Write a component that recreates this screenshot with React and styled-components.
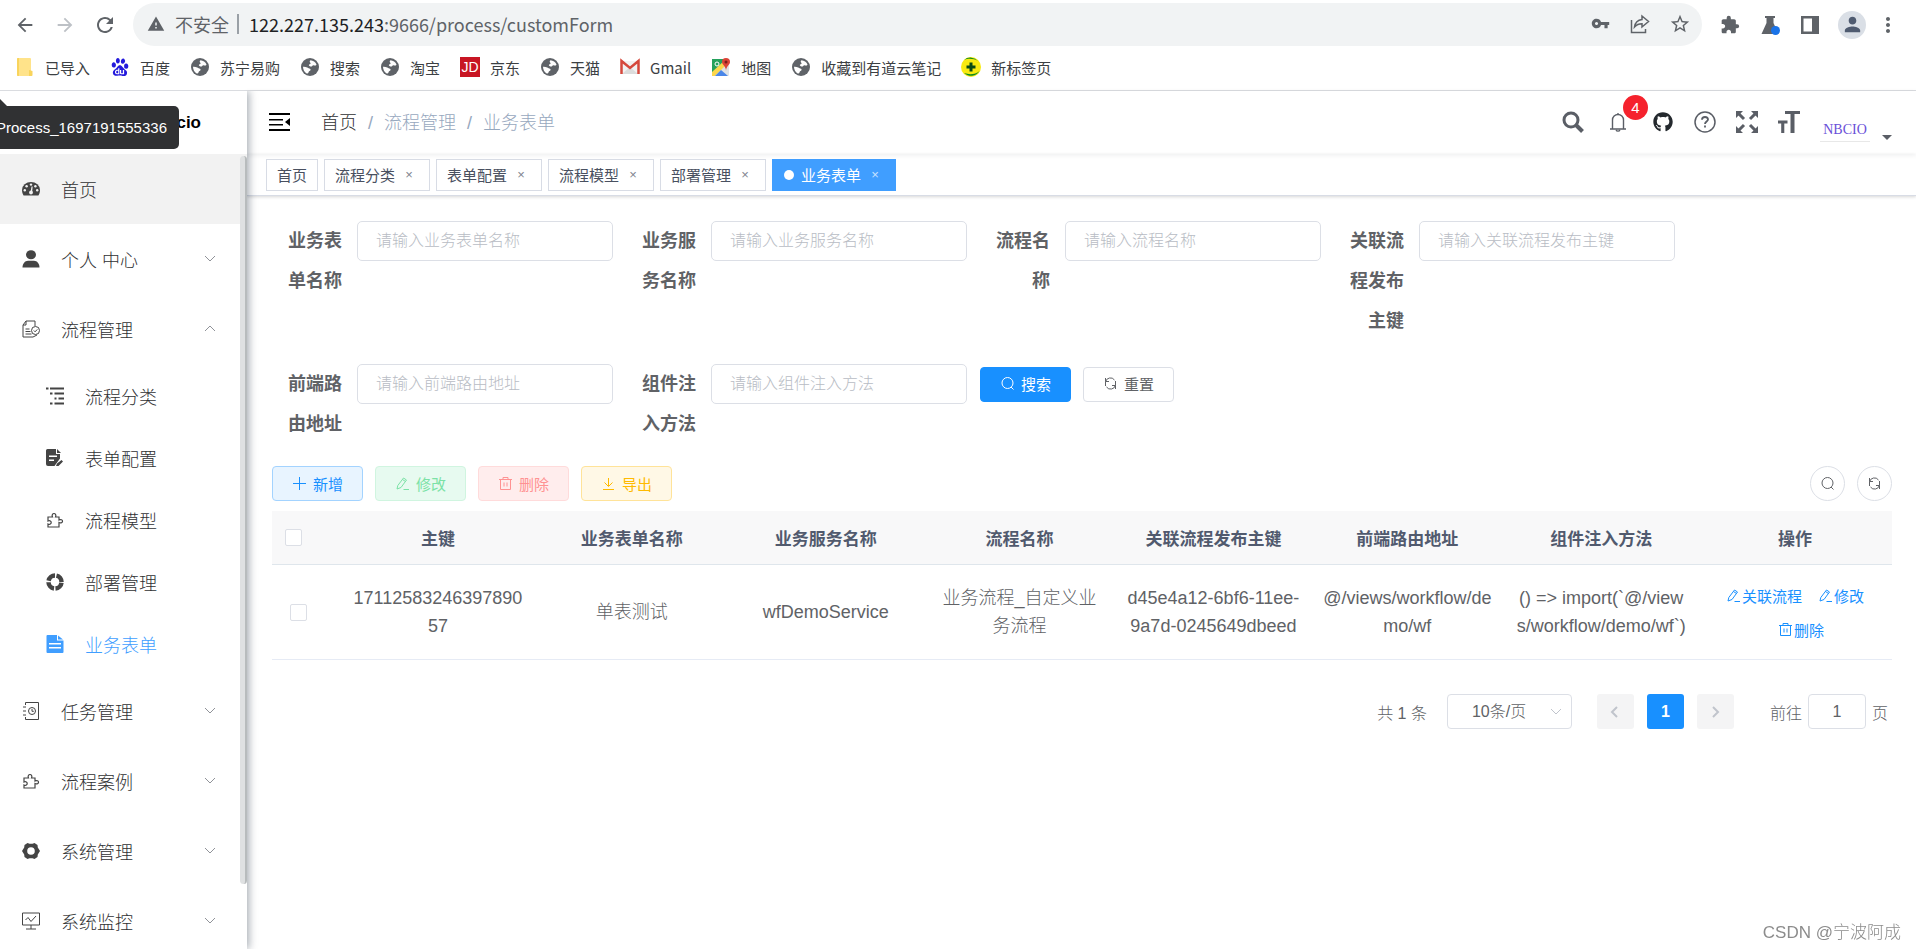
import React, { useState } from "react";
import styled, { createGlobalStyle, css } from "styled-components";
import {
  MdArrowBack,
  MdArrowForward,
  MdRefresh,
  MdWarning,
  MdVpnKey,
  MdStarBorder,
  MdExtension,
  MdPerson,
  MdMoreVert,
} from "react-icons/md";
import { FaGithub } from "react-icons/fa";
import { SiBaidu } from "react-icons/si";

const GlobalStyle = createGlobalStyle`
  * {
    box-sizing: border-box;
  }
  body {
    margin: 0;
    background: #fff;
    color: #606266;
    font-family: "Liberation Sans", "Noto Sans CJK SC", sans-serif;
    font-size: 18px;
    font-weight: 300;
  }
  button, input, select {
    font-family: inherit;
    font-weight: inherit;
    margin: 0;
  }
  a {
    color: inherit;
    text-decoration: none;
  }
  svg {
    display: block;
    flex: none;
  }
`;

/* ---------- icons ---------- */

const Svg = ({ size = 18, box = 24, children, ...rest }) => (
  <svg width={size} height={size} viewBox={`0 0 ${box} ${box}`} fill="none" stroke="currentColor" aria-hidden="true" {...rest}>
    {children}
  </svg>
);

const GlobeIcon = () => (
  <Svg size={18} box={18} stroke="none">
    <circle cx="9" cy="9" r="9" fill="#5f6368" />
    <path d="M9.5 2.200c2.600.3 5 1.800 6 4.200-.5 1.400-1.600 1.300-2.400 1-.8-.5-1.500-.2-1.900.5-.6 1-1.900.6-2.700 0-1-.6-.8-1.400.3-1.700 1-.3 1-1.100.3-1.700-.6-.7-.4-1.800.4-2.300z" fill="#fff" />
    <path d="M2 8.700c1.300-.2 3 .1 4.200.9.9.6 2 .7 2.800 1.200 1 .7.7 1.900-.4 2.200-.9.200-1 1-1.200 1.800-.2.700-1 1-1.700.6C3.400 14 2 11.500 2 8.700z" fill="#fff" />
  </Svg>
);

const FolderIcon = () => (
  <Svg size={20} box={20} stroke="none">
    <rect x="2" y="1" width="14" height="18" rx="1" fill="#ffe38a" />
    <path d="M2 2a1 1 0 0 1 1-1h1v18H3a1 1 0 0 1-1-1z" fill="#f9d45c" />
    <path d="M14 13l3.500 1v4a1 1 0 0 1-1 1H14z" fill="#f9d45c" />
  </Svg>
);

const GmailIcon = () => (
  <Svg size={20} box={20} stroke="none">
    <path d="M2 4h16v13H2z" fill="#f2f2f2" />
    <path d="M2 17l8-7 8 7z" fill="#dcdcdc" />
    <path d="M1.500 17V4l8.500 7 8.500-7v13" stroke="#d5483c" strokeWidth="2.500" fill="none" />
  </Svg>
);

const MapIcon = () => (
  <Svg size={20} box={20} stroke="none">
    <rect x="1" y="2" width="17" height="17" rx="1" fill="#dfe3e6" />
    <path d="M1 2h13v5L1 17z" fill="#25a15c" />
    <path d="M1 15L13 4l3 3L4 19H1z" fill="#fbd64c" />
    <path d="M4 19l6-6 7 6z" fill="#4a86e8" />
    <circle cx="6" cy="7" r="2" stroke="#fff" />
    <path d="M15 1a4 4 0 0 1 4 4c0 3-4 4-4 9 0-5-4-6-4-9a4 4 0 0 1 4-4z" fill="#db4437" />
    <circle cx="15" cy="5" r="1.500" fill="#7b1f19" />
  </Svg>
);

const PlusBallIcon = () => (
  <Svg size={20} box={20} stroke="none">
    <circle cx="10" cy="10" r="10" fill="#f8ea10" />
    <path d="M3 3a10 10 0 0 1 14 1c-4-2.500-10-3-14-1zM3 16a10 10 0 0 0 15.500-2c-4 3.500-10 4-15.500 2z" fill="#0d8a1f" />
    <path d="M10 5.500v9M5.500 10h9" stroke="#0b4a14" strokeWidth="3" />
  </Svg>
);

const ShareIcon = () => (
  <Svg size={20} box={20} strokeWidth="1.500">
    <path d="M1.500 6v12.500h14V15" />
    <path d="M12 2l6.500 5.500L12 13V9.800c-3.500 0-5.500 1-7.500 3.200.6-4 3-7 7.500-7.500z" />
  </Svg>
);

const FlaskIcon = () => (
  <Svg size={20} box={20} stroke="none">
    <path d="M5 1h10v2h-1.500v5l5 11H1.500l5-11V3H5z" fill="#5f6368" />
    <circle cx="15.500" cy="15.500" r="4.500" fill="#1a73e8" />
  </Svg>
);

const PanelIcon = () => (
  <Svg size={18} box={18} stroke="none">
    <path fillRule="evenodd" d="M0 0h18v18H0zM2.500 2.500v13H11v-13z" fill="#5f6368" />
  </Svg>
);

const DashboardIcon = () => (
  <Svg stroke="none" box={18}>
    <path d="M0 10a9 8 0 0 1 18 0c0 2.200-.6 4-1.600 5.500H1.600C.6 14 0 12.200 0 10z" fill="currentColor" />
    <g fill="#f2f2f2">
      <circle cx="2.800" cy="10.200" r="1.200" />
      <circle cx="4.600" cy="6.300" r="1.200" />
      <circle cx="9" cy="4.600" r="1.200" />
      <circle cx="13.400" cy="6.300" r="1.200" />
      <circle cx="15.200" cy="10.200" r="1.200" />
      <circle cx="9" cy="12.500" r="1.900" />
      <path d="M9.500 6.500h1.200L10 12.500H8.500z" />
    </g>
  </Svg>
);

const PeopleIcon = () => (
  <Svg stroke="none" box={18}>
    <ellipse cx="9" cy="4.700" rx="5" ry="4.500" fill="currentColor" />
    <path d="M.5 17.500c0-4 2.500-6.800 5.500-6.800h6c3 0 5.500 2.800 5.500 6.800z" fill="currentColor" />
  </Svg>
);

const ProcessIcon = () => (
  <Svg box={18}>
    <path d="M11 17H1V5l3-4h9v5M1 5h3V1M3.500 9h4M3.500 11.500h5M3.500 14h6" />
    <circle cx="13.500" cy="10.500" r="4" />
    <path d="M11.800 10.500l1.300 1.300 2.200-2.400M11 17l4-2" />
  </Svg>
);

const TreeIcon = () => (
  <Svg box={18} strokeWidth="2">
    <path d="M0 1.500h2.500M4 1.500h14M4 6.500h2.500M8.500 6.500H18M8.500 11.500h2M12.500 11.500H18M4 16.500h2.500M8.500 16.500H18" />
  </Svg>
);

const FormIcon = () => (
  <Svg box={18} stroke="none">
    <path fillRule="evenodd" d="M1.500 0H10v5h4v4.500L8.500 17H2a2 2 0 0 1-2-2V1.500A1.500 1.500 0 0 1 1.500 0zM3 6.500V8h8V6.500zm0 4V12h5v-1.500z" fill="currentColor" />
    <path d="M11 0l4 4h-4zM10 17l1-2.500 4.500-3.500 1.500 1.500L12.500 17z" fill="currentColor" />
  </Svg>
);

const PuzzleIcon = () => (
  <Svg box={18} strokeWidth="1.200">
    <path d="M2 6h4.500c-1-2 .2-3.500 1.500-3.500S10.500 4 9.500 6H13v3c2-1 3.500 0 3.500 1.200S15 12.500 13 11.500V16H2v-3c2 .8 3.200-.2 3.200-1.500S4 9.200 2 10z" />
  </Svg>
);

const RingIcon = () => (
  <Svg box={18}>
    <circle cx="9" cy="9" r="6.500" strokeWidth="4.500" strokeDasharray="8.700 1.510" strokeDashoffset="-.75" />
  </Svg>
);

const DocIcon = () => (
  <Svg box={18} stroke="none">
    <path fillRule="evenodd" d="M1.500 0H11v5.500h6.500V17a1 1 0 0 1-1 1h-15a1 1 0 0 1-1-1V1a1 1 0 0 1 1-1zM3 8v1.500h12V8zm0 4v1.500h12V12z" fill="currentColor" />
    <path d="M12 .5l5 4h-5z" fill="currentColor" />
  </Svg>
);

const TaskIcon = () => (
  <Svg box={18}>
    <path d="M3.500 3V.5h13v17h-13V15M1 5h3M1 9h3M1 13h3" />
    <circle cx="10" cy="9" r="3.500" />
    <path d="M10 7v2.300h1.800" />
  </Svg>
);

const GearIcon = () => (
  <Svg box={18} stroke="none">
    <path fillRule="evenodd" d="M5.500 1l2 .8h3l2-.8 3 2 .3 2.500L18 9l-2.200 3.500-.3 2.500-3 2-2-.8h-3l-2 .8-3-2-.3-2.500L0 9l2.200-3.500L2.500 3zM9 5.200a3.800 3.800 0 1 0 0 7.600 3.800 3.800 0 0 0 0-7.600z" fill="currentColor" />
  </Svg>
);

const MonitorIcon = () => (
  <Svg box={18}>
    <path d="M.5 1h17v12H.5zM9 13v4M4 17h10M3.500 8l2.500-2.500 3 4L14 4" />
  </Svg>
);

const Chevron = ({ up }) => (
  <Svg size={12} box={12}>
    <path d={up ? "M1 8l5-5 5 5" : "M1 3l5 5 5-5"} />
  </Svg>
);

const FoldIcon = () => (
  <svg width="21" height="18" viewBox="0 0 21 18" aria-hidden="true">
    <path d="M0 0h21v2H0zM0 6h14v1.500H0zM0 11h14v1.500H0zM0 16h21v2H0zM21 5v8l-5-4z" fill="#000" />
  </svg>
);

const SearchBold = () => (
  <Svg size={22} box={22}>
    <circle cx="9" cy="9" r="7" strokeWidth="3" />
    <path d="M14 14l6.500 6.500" strokeWidth="4" />
  </Svg>
);

const BellIcon = () => (
  <Svg size={20} box={20} strokeWidth="1.400">
    <path d="M10 1v1.500M4.500 17V8a5.500 5.500 0 0 1 11 0v9M2 17h16M8 18.200c.8 1.200 3.200 1.200 4 0" />
  </Svg>
);

const HelpIcon = () => (
  <Svg size={22} box={22} strokeWidth="1.500">
    <circle cx="11" cy="11" r="10" />
    <path d="M8 8.800C8 7 9.300 6 11 6s3 1 3 2.600C14 10.500 11 10.700 11 13" strokeWidth="1.800" />
    <path d="M11 14.500v2" strokeWidth="1.800" />
  </Svg>
);

const FullIcon = () => (
  <Svg size={22} box={22} strokeWidth="3">
    <path d="M2 2l6 6M20 2l-6 6M2 20l6-6M20 20l-6-6" />
    <path d="M0 0h7L0 7zM22 0v7l-7-7zM0 22v-7l7 7zM22 22h-7l7-7z" fill="currentColor" stroke="none" />
  </Svg>
);

const SizeIcon = () => (
  <Svg size={22} box={22} stroke="none">
    <path d="M7 0h15v3h-5.500v19h-4V3H7zM0 9.500h9.500v3H6.300V22H3.200v-9.500H0z" fill="currentColor" />
  </Svg>
);

const SearchThin = () => (
  <Svg size={15} box={15}>
    <circle cx="7.500" cy="7" r="5.500" />
    <path d="M11 11l2.500 2.500" />
  </Svg>
);

const RefreshThin = () => (
  <Svg size={15} box={15}>
    <path d="M2.500 10V6a5 5 0 0 1 9-2M12.500 5v4a5 5 0 0 1-9 2M2.500 2v3.500H6M12.500 13V9.500H9" />
  </Svg>
);

const EditThin = () => (
  <Svg size={15} box={15}>
    <path d="M2 13l.8-3.500L8.500 2l3 2L6 11.500zM7.500 3.500l3 2M8.500 13.500H14" />
  </Svg>
);

const TrashThin = () => (
  <Svg size={15} box={15}>
    <path d="M1 3.500h13M5 3V1.500h5V3M2.500 3.500v10h10v-10M6 6.500v4M9 6.500v4" />
  </Svg>
);

const PlusThin = () => (
  <Svg size={15} box={15}>
    <path d="M7.500 1v13M1 7.500h13" />
  </Svg>
);

const DownThin = () => (
  <Svg size={15} box={15}>
    <path d="M7.500 2v8M3.500 6.500l4 4 4-4M2 13.500h11" />
  </Svg>
);

/* ---------- browser bar ---------- */

const BrowserBar = styled.header`
  border-bottom: 1px solid #dadce0;
  font-family: "Noto Sans CJK SC", sans-serif;
  font-weight: 400;
  color: #5f6368;
`;

const AddressRow = styled.div`
  display: flex;
  align-items: center;
  padding: 3px 0 0 13px;
`;

const ToolButton = styled.button`
  display: flex;
  align-items: center;
  justify-content: center;
  width: 24px;
  height: 24px;
  padding: 0;
  border: 0;
  background: none;
  color: ${(props) => (props.$dim ? "#bdc1c6" : "#5f6368")};
  margin-right: 16px;
`;

const Omnibox = styled.div`
  flex: 1;
  display: flex;
  align-items: center;
  height: 43px;
  margin-right: 16px;
  padding: 0 10px 2px 14px;
  border-radius: 22px;
  background: #f1f3f4;
  font-size: 18px;
  white-space: nowrap;

  button:last-child {
    margin-right: 0;
  }
`;

const Insecure = styled.span`
  padding: 0 8px 0 10px;
  line-height: 20px;
  border-right: 2px solid #9aa0a6;
  margin-right: 10px;
`;

const Url = styled.span`
  flex: 1;

  b {
    font-weight: 400;
    color: #202124;
  }
`;

const Profile = styled.button`
  display: flex;
  align-items: center;
  justify-content: center;
  width: 28px;
  height: 28px;
  margin-right: 10px;
  padding: 0;
  border: 0;
  border-radius: 50%;
  background: #dadfe6;
  color: #4f5b70;
`;

const Bookmarks = styled.nav`
  display: flex;
  gap: 20px;
  height: 44px;
  padding: 0 15px 2px;
  align-items: center;
  font-size: 15px;
  color: #3c4043;

  a {
    display: flex;
    align-items: center;
    gap: 10px;
  }
`;

const BookmarkIcon = styled.span`
  display: flex;
  justify-content: center;
  width: 20px;
`;

const JdMark = styled.span`
  width: 20px;
  height: 20px;
  background: #c81623;
  color: #fff;
  font: 400 14px/20px "Liberation Sans", sans-serif;
  text-align: center;
`;

/* ---------- layout ---------- */

const Page = styled.div`
  display: flex;
  flex-direction: column;
  height: 100vh;
  overflow: hidden;
`;

const Body = styled.div`
  display: flex;
  flex: 1;
  min-height: 0;
`;

const Sidebar = styled.aside`
  position: relative;
  z-index: 2;
  width: 247px;
  flex: none;
  background: #fff;
  box-shadow: 2px 0 8px rgba(0, 21, 41, 0.35);
  clip-path: inset(0 -12px 0 0);
  color: #303133;
`;

const Logo = styled.h1`
  margin: 0;
  height: 63px;
  padding-right: 46px;
  font-size: 17px;
  line-height: 63px;
  text-align: right;
  color: #000;
`;

const IdTip = styled.div`
  position: absolute;
  z-index: 3;
  left: -16px;
  top: 15px;
  padding: 0 12px;
  border-radius: 5px;
  background: #303133;
  color: #fff;
  font-size: 15px;
  line-height: 43px;

  &::before {
    content: "";
    position: absolute;
    left: 7px;
    top: -8px;
    border: 8px solid transparent;
    border-top: 0;
    border-bottom-color: #303133;
  }
`;

const Menu = styled.ul`
  margin: 0;
  padding: ${(props) => (props.$sub ? "1px 0" : "0")};
  list-style: none;
`;

const MenuLink = styled.a`
  display: flex;
  align-items: center;
  height: ${(props) => (props.$sub ? 62 : 70)}px;
  padding: 0 31px 0 ${(props) => (props.$sub ? 46 : 22)}px;
  gap: 21px;
  background: ${(props) => (props.$hover ? "#f2f2f2" : "transparent")};
  color: ${(props) => (props.$active ? "#409eff" : "inherit")};

  span {
    flex: 1;
  }
  svg:first-child {
    color: ${(props) => (props.$active ? "#409eff" : "#444")};
  }
  svg:last-child {
    color: #909399;
  }
`;

const ScrollThumb = styled.i`
  position: absolute;
  top: 65px;
  right: 0;
  bottom: 65px;
  width: 7px;
  border-right: 2px solid #b8bcbd;
  border-radius: 4px;
  background: #dfe1e2;
`;

const Main = styled.main`
  flex: 1;
  min-width: 0;
`;

const Navbar = styled.div`
  display: flex;
  align-items: center;
  height: 63px;
  padding: 0 24px 2px 21px;
  box-shadow: 0 1px 5px rgba(0, 21, 41, 0.08);
  color: #5a5e66;
`;

const IconButton = styled.button`
  position: relative;
  display: flex;
  justify-content: center;
  padding: 0;
  border: 0;
  background: none;
  color: ${(props) => props.$color || "#5a5e66"};
  width: ${(props) => props.$width || 22}px;
`;

const Crumbs = styled.nav`
  flex: 1;
  display: flex;
  align-items: baseline;
  gap: 11px;
  margin-left: 31px;
  padding-bottom: 2px;
  color: #97a8be;

  a:first-child {
    color: #303133;
  }
`;

const NavTools = styled.div`
  display: flex;
  align-items: center;
  gap: 20px;
`;

const Badge = styled.span`
  position: absolute;
  top: -17px;
  right: -16px;
  width: 25px;
  height: 25px;
  border-radius: 50%;
  background: #f5222d;
  color: #fff;
  font-size: 15px;
  line-height: 25px;
`;

const UserMenu = styled.button`
  display: flex;
  align-items: flex-end;
  gap: 12px;
  padding: 0;
  border: 0;
  background: none;

  span {
    width: 50px;
    padding: 8px 0 3px;
    border-bottom: 1px solid #e8e8e8;
    color: #6a4fd8;
    font: 14px/17px "Liberation Serif", serif;
    text-align: center;
    margin-top: 12px;
  }
  i {
    margin-bottom: 2px;
    border: 5px solid transparent;
    border-top-color: #5a5e66;
    border-bottom: 0;
  }
`;

const TagBar = styled.div`
  display: flex;
  gap: 6px;
  height: 42px;
  padding: 5px 19px;
  border-bottom: 1px solid #d8dce5;
  box-shadow: 0 1px 3px rgba(0, 0, 0, 0.16);
`;

const Tag = styled.a`
  display: flex;
  align-items: center;
  height: 32px;
  padding: 0 10px 1px;
  border: 1px solid ${(props) => (props.$active ? "#409eff" : "#d8dce5")};
  background: ${(props) => (props.$active ? "#409eff" : "#fff")};
  color: ${(props) => (props.$active ? "#fff" : "#495060")};
  font-size: 15px;
  font-weight: 400;

  ${(props) =>
    props.$active &&
    css`
      &::before {
        content: "";
        width: 10px;
        height: 10px;
        margin: 0 7px 0 1px;
        border-radius: 50%;
        background: #fff;
      }
    `}
`;

const TagClose = styled.span`
  width: 20px;
  margin-left: 4px;
  text-align: center;
  font-size: 13px;
  opacity: 0.7;
`;

const Content = styled.div`
  padding: 25px 24px 0 25px;
`;

/* ---------- query form ---------- */

const QueryForm = styled.form`
  display: flex;
  flex-wrap: wrap;
  align-items: flex-start;
  gap: 23px 13px;
  margin-bottom: 22px;
`;

const Field = styled.div`
  display: flex;
  align-items: flex-start;

  label {
    width: 85px;
    padding-right: 15px;
    font-weight: 700;
    line-height: 40px;
    text-align: right;
  }
  input {
    width: 256px;
    height: 40px;
    padding: 0 18px;
    border: 1px solid #dcdfe6;
    border-radius: 5px;
    font-size: 16px;
    color: #606266;
  }
  input::placeholder {
    color: #b8bcc4;
  }
`;

const ButtonRow = styled.div`
  display: flex;
  gap: 12px;
  align-items: center;
  min-height: ${(props) => props.$height || 35}px;
`;

const tones = {
  primary: ["#1890ff", "#1890ff", "#fff"],
  plain: ["#fff", "#dcdfe6", "#606266"],
  add: ["#e8f4ff", "#a3d3ff", "#1890ff"],
  edit: ["#e7faf0", "#d0f5e0", "#7be2a6"],
  remove: ["#ffeded", "#ffdbdb", "#ff9292"],
  export: ["#fff8e6", "#ffe399", "#ffba00"],
};

const Button = styled.button`
  display: flex;
  align-items: center;
  gap: 6px;
  height: 35px;
  padding: 0 19px 1px;
  border-radius: 4px;
  border: 1px solid ${(props) => tones[props.$tone][1]};
  background: ${(props) => tones[props.$tone][0]};
  color: ${(props) => tones[props.$tone][2]};
  font-size: 15px;
  font-weight: 400;
`;

const RoundButton = styled.button`
  display: flex;
  align-items: center;
  justify-content: center;
  width: 35px;
  height: 35px;
  padding: 0;
  border: 1px solid #dcdfe6;
  border-radius: 50%;
  background: #fff;
  color: #606266;
`;

const Toolbar = styled.div`
  display: flex;
  justify-content: space-between;
  margin-bottom: 10px;
`;

/* ---------- table ---------- */

const Table = styled.table`
  width: 100%;
  table-layout: fixed;
  border-spacing: 0;
  text-align: center;

  th {
    height: 54px;
    padding: 0 11px;
    border-bottom: 1px solid #dfe6ec;
    background: #f8f8f9;
    color: #515a6e;
    font-size: 17px;
  }
  td {
    height: 95px;
    padding: 0 10px;
    border-bottom: 1px solid #e6ebf5;
    line-height: 28px;
    word-break: break-all;
    white-space: pre-line;
  }
  th:first-child {
    text-align: left;
    padding: 0 0 0 13px;
  }
  td:first-child {
    text-align: left;
    padding: 0 0 0 18px;
  }
`;

const CheckCol = styled.col`
  width: 69px;
`;

const Check = styled.input`
  appearance: none;
  display: block;
  width: 17px;
  height: 17px;
  margin: 0;
  border: 1px solid #dcdfe6;
  border-radius: 2px;
  background: #fff;
`;

const TextButton = styled.button`
  display: flex;
  align-items: center;
  gap: 1px;
  height: 34px;
  padding: 0;
  border: 0;
  background: none;
  color: #1890ff;
  font-size: 15px;
  font-weight: 400;

  & + & {
    margin-left: 12px;
  }
`;

const Actions = styled.div`
  display: flex;
  flex-wrap: wrap;
  justify-content: center;
  column-gap: 4px;
`;

const Pager = styled.div`
  display: flex;
  align-items: center;
  justify-content: flex-end;
  padding: 34px 4px 0 0;
  font-size: 16px;
`;

const SizeSelect = styled.div`
  display: grid;
  grid-template-columns: 1fr 22px;
  align-items: center;
  width: 125px;
  height: 35px;
  margin: 0 25px 0 20px;
  color: #c0c4cc;

  select {
    grid-area: 1 / 1 / 2 / 3;
    appearance: none;
    height: 35px;
    padding: 0 0 0 24px;
    border: 1px solid #dcdfe6;
    border-radius: 4px;
    background: none;
    color: #606266;
    font-size: 16px;
  }
  svg {
    grid-area: 1 / 2;
  }
`;

const PageButton = styled.button`
  display: flex;
  align-items: center;
  justify-content: center;
  width: 37px;
  height: 35px;
  padding: 0;
  border: 0;
  border-radius: 3px;
  font-size: 16px;
  font-weight: 700;
  background: ${(props) => (props.$current ? "#1890ff" : "#f4f4f5")};
  color: ${(props) => (props.$current ? "#fff" : "#c0c4cc")};
`;

const PageButtons = styled.div`
  display: flex;
  gap: 13px;
  margin-right: 36px;
`;

const Jump = styled.label`
  display: flex;
  align-items: center;
  gap: 6px;

  input {
    width: 58px;
    height: 35px;
    padding: 0;
    border: 1px solid #dcdfe6;
    border-radius: 4px;
    color: #606266;
    font-size: 16px;
    text-align: center;
  }
`;

const Watermark = styled.div`
  position: fixed;
  right: 15px;
  bottom: 6px;
  color: #8c8c8c;
  font-size: 17px;
`;

const bookmarks = [
  ["已导入", <FolderIcon />],
  ["百度", <SiBaidu size={18} color="#2319dc" />],
  ["苏宁易购", <GlobeIcon />],
  ["搜索", <GlobeIcon />],
  ["淘宝", <GlobeIcon />],
  ["京东", <JdMark>JD</JdMark>],
  ["天猫", <GlobeIcon />],
  ["Gmail", <GmailIcon />],
  ["地图", <MapIcon />],
  ["收藏到有道云笔记", <GlobeIcon />],
  ["新标签页", <PlusBallIcon />],
];

const menu = [
  { name: "首页", icon: <DashboardIcon />, leaf: true },
  { name: "个人 中心", icon: <PeopleIcon /> },
  {
    name: "流程管理",
    icon: <ProcessIcon />,
    children: [
      { name: "流程分类", icon: <TreeIcon /> },
      { name: "表单配置", icon: <FormIcon /> },
      { name: "流程模型", icon: <PuzzleIcon /> },
      { name: "部署管理", icon: <RingIcon /> },
      { name: "业务表单", icon: <DocIcon />, active: true },
    ],
  },
  { name: "任务管理", icon: <TaskIcon /> },
  { name: "流程案例", icon: <PuzzleIcon /> },
  { name: "系统管理", icon: <GearIcon /> },
  { name: "系统监控", icon: <MonitorIcon /> },
];

const tags = ["首页", "流程分类", "表单配置", "流程模型", "部署管理", "业务表单"];

const fields = [
  ["businessName", "业务表单名称", "请输入业务表单名称"],
  ["businessService", "业务服务名称", "请输入业务服务名称"],
  ["flowName", "流程名称", "请输入流程名称"],
  ["deployId", "关联流程发布主键", "请输入关联流程发布主键"],
  ["routeName", "前端路由地址", "请输入前端路由地址"],
  ["component", "组件注入方法", "请输入组件注入方法"],
];

const columns = ["主键", "业务表单名称", "业务服务名称", "流程名称", "关联流程发布主键", "前端路由地址", "组件注入方法", "操作"];

const rows = [
  [
    "1711258324639789057",
    "单表测试",
    "wfDemoService",
    "业务流程_自定义业\n务流程",
    "d45e4a12-6bf6-11ee-\n9a7d-0245649dbeed",
    "@/views/workflow/de\nmo/wf",
    "() => import(`@/view\ns/workflow/demo/wf`)",
  ],
];

const Browser = () => (
  <BrowserBar>
    <AddressRow>
      <ToolButton aria-label="back"><MdArrowBack size={22} /></ToolButton>
      <ToolButton aria-label="forward" $dim><MdArrowForward size={22} /></ToolButton>
      <ToolButton aria-label="reload"><MdRefresh size={24} /></ToolButton>
      <Omnibox>
        <MdWarning size={18} />
        <Insecure>不安全</Insecure>
        <Url><b>122.227.135.243</b>:9666/process/customForm</Url>
        <ToolButton aria-label="passwords"><MdVpnKey size={19} /></ToolButton>
        <ToolButton aria-label="share"><ShareIcon /></ToolButton>
        <ToolButton aria-label="bookmark"><MdStarBorder size={22} /></ToolButton>
      </Omnibox>
      <ToolButton aria-label="extensions"><MdExtension size={20} /></ToolButton>
      <ToolButton aria-label="labs"><FlaskIcon /></ToolButton>
      <ToolButton aria-label="side panel"><PanelIcon /></ToolButton>
      <Profile aria-label="profile"><MdPerson size={23} /></Profile>
      <ToolButton aria-label="more"><MdMoreVert size={24} /></ToolButton>
    </AddressRow>
    <Bookmarks>
      {bookmarks.map(([name, icon]) => (
        <a href="#" key={name}>
          <BookmarkIcon>{icon}</BookmarkIcon>
          {name}
        </a>
      ))}
    </Bookmarks>
  </BrowserBar>
);

const SideMenu = () => (
  <Sidebar>
    <Logo>cio</Logo>
    <IdTip>Process_1697191555336</IdTip>
    <Menu>
      {menu.map((item) => (
        <li key={item.name}>
          <MenuLink href="#" $hover={item.leaf}>
            {item.icon}
            <span>{item.name}</span>
            {!item.leaf && <Chevron up={!!item.children} />}
          </MenuLink>
          {item.children && (
            <Menu $sub>
              {item.children.map((child) => (
                <li key={child.name}>
                  <MenuLink href="#" $sub $active={child.active}>
                    {child.icon}
                    <span>{child.name}</span>
                  </MenuLink>
                </li>
              ))}
            </Menu>
          )}
        </li>
      ))}
    </Menu>
    <ScrollThumb />
  </Sidebar>
);

const Query = () => (
  <QueryForm onSubmit={(e) => e.preventDefault()}>
    {fields.map(([id, label, hint]) => (
      <Field key={id}>
        <label htmlFor={id}>{label}</label>
        <input id={id} placeholder={hint} />
      </Field>
    ))}
    <ButtonRow $height={40}>
      <Button $tone="primary"><SearchThin />搜索</Button>
      <Button $tone="plain" type="reset"><RefreshThin />重置</Button>
    </ButtonRow>
  </QueryForm>
);

const App = () => {
  const [page, setPage] = useState("1");

  return (
    <Page>
      <GlobalStyle />
      <Browser />
      <Body>
        <SideMenu />
        <Main>
          <Navbar>
            <IconButton aria-label="fold"><FoldIcon /></IconButton>
            <Crumbs>
              <a href="#">首页</a>
              <span>/</span>
              <span>流程管理</span>
              <span>/</span>
              <span>业务表单</span>
            </Crumbs>
            <NavTools>
              <IconButton aria-label="search"><SearchBold /></IconButton>
              <IconButton aria-label="messages" $width={28}>
                <BellIcon />
                <Badge>4</Badge>
              </IconButton>
              <IconButton aria-label="github" $color="#24292e"><FaGithub size={20} /></IconButton>
              <IconButton aria-label="help"><HelpIcon /></IconButton>
              <IconButton aria-label="fullscreen"><FullIcon /></IconButton>
              <IconButton aria-label="size"><SizeIcon /></IconButton>
              <UserMenu>
                <span>NBCIO</span>
                <i />
              </UserMenu>
            </NavTools>
          </Navbar>
          <TagBar>
            {tags.map((tag, i) => (
              <Tag href="#" key={tag} $active={tag === "业务表单"}>
                {tag}
                {i > 0 && <TagClose>×</TagClose>}
              </Tag>
            ))}
          </TagBar>
          <Content>
            <Query />
            <Toolbar>
              <ButtonRow>
                <Button $tone="add"><PlusThin />新增</Button>
                <Button $tone="edit" disabled><EditThin />修改</Button>
                <Button $tone="remove" disabled><TrashThin />删除</Button>
                <Button $tone="export"><DownThin />导出</Button>
              </ButtonRow>
              <ButtonRow>
                <RoundButton aria-label="toggle search"><SearchThin /></RoundButton>
                <RoundButton aria-label="refresh"><RefreshThin /></RoundButton>
              </ButtonRow>
            </Toolbar>
            <Table>
              <colgroup>
                <CheckCol />
                {columns.map((name) => <col key={name} />)}
              </colgroup>
              <thead>
                <tr>
                  <th><Check type="checkbox" aria-label="select all" /></th>
                  {columns.map((name) => <th key={name}>{name}</th>)}
                </tr>
              </thead>
              <tbody>
                {rows.map((row) => (
                  <tr key={row[0]}>
                    <td><Check type="checkbox" aria-label="select row" /></td>
                    {row.map((cell) => <td key={cell}>{cell}</td>)}
                    <td>
                      <Actions>
                        <TextButton><EditThin />关联流程</TextButton>
                        <TextButton><EditThin />修改</TextButton>
                        <TextButton><TrashThin />删除</TextButton>
                      </Actions>
                    </td>
                  </tr>
                ))}
              </tbody>
            </Table>
            <Pager>
              共 1 条
              <SizeSelect>
                <select aria-label="page size"><option>10条/页</option></select>
                <Chevron />
              </SizeSelect>
              <PageButtons>
                <PageButton aria-label="previous" disabled>
                  <Svg size={14} box={14} strokeWidth="2"><path d="M9 2L4 7l5 5" /></Svg>
                </PageButton>
                <PageButton $current>1</PageButton>
                <PageButton aria-label="next" disabled>
                  <Svg size={14} box={14} strokeWidth="2"><path d="M5 2l5 5-5 5" /></Svg>
                </PageButton>
              </PageButtons>
              <Jump>
                前往
                <input value={page} onChange={(e) => setPage(e.target.value)} />
                页
              </Jump>
            </Pager>
          </Content>
        </Main>
      </Body>
      <Watermark>CSDN @宁波阿成</Watermark>
    </Page>
  );
};

export default App;
